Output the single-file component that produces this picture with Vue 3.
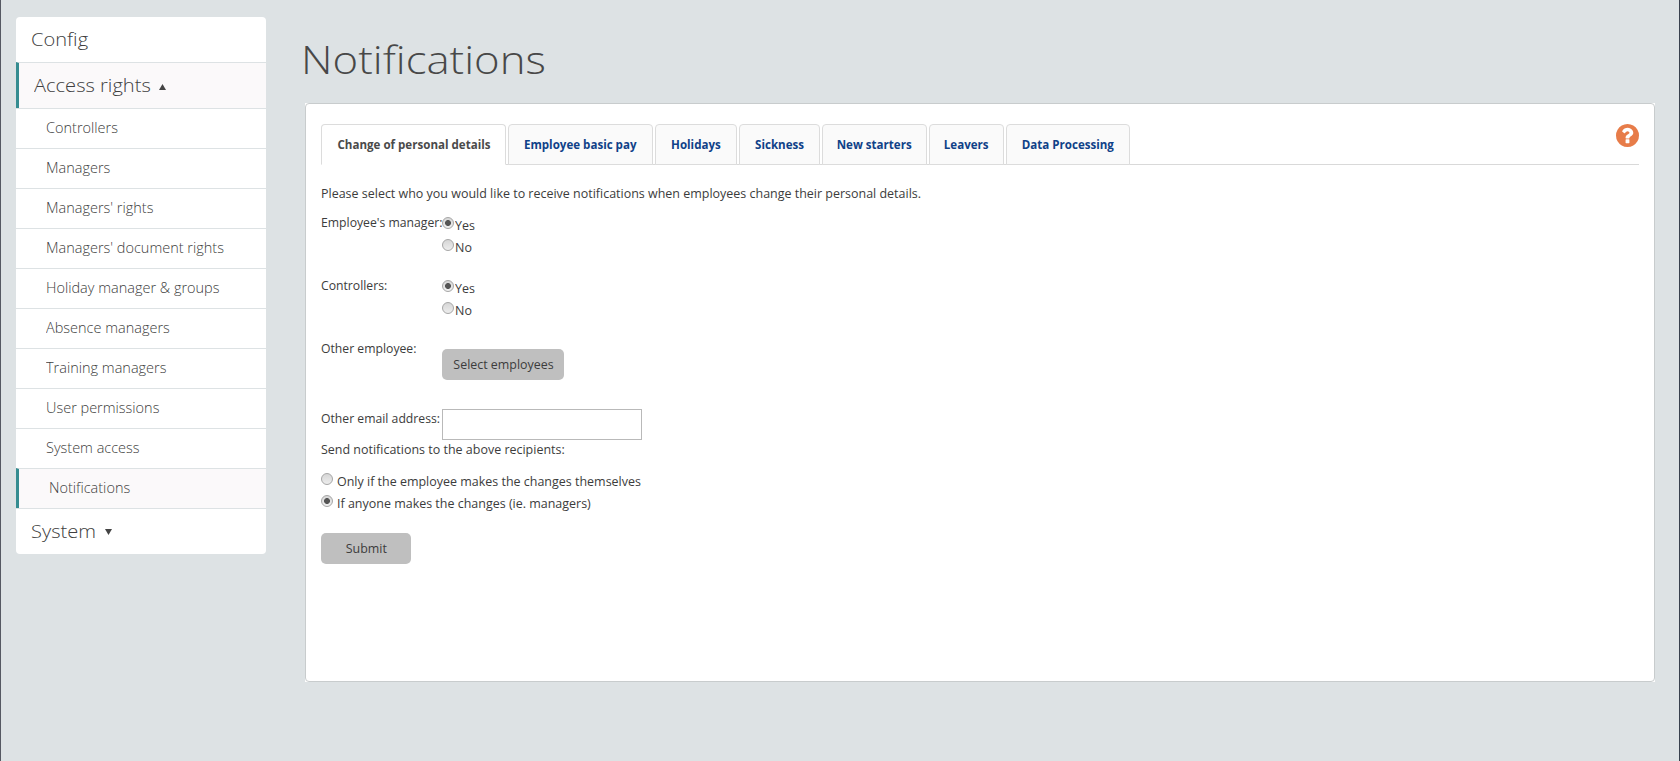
<script setup>
import { ref } from 'vue'

const accessItems = [
  'Controllers',
  'Managers',
  "Managers' rights",
  "Managers' document rights",
  'Holiday manager & groups',
  'Absence managers',
  'Training managers',
  'User permissions',
  'System access',
  'Notifications',
]
const tabs = [
  { label: 'Change of personal details', width: 185 },
  { label: 'Employee basic pay', width: 145 },
  { label: 'Holidays', width: 82 },
  { label: 'Sickness', width: 81 },
  { label: 'New starters', width: 105 },
  { label: 'Leavers', width: 75 },
  { label: 'Data Processing', width: 124 },
]
const activeTab = ref('Change of personal details')
const manager = ref('Yes')
const controllers = ref('Yes')
const scope = ref('anyone')
const email = ref('')
</script>

<template>
  <div class="page">
    <nav class="menu">
      <a class="top first"><span>Config</span></a>
      <a class="top on">
        <span>Access rights</span>
        <svg class="caret up" width="7" height="6" viewBox="0 0 7 6"><path d="M3.5 0L7 6H0z" /></svg>
      </a>
      <a v-for="item in accessItems" :key="item" class="sub" :class="{ on: item === 'Notifications' }">
        <span>{{ item }}</span>
      </a>
      <a class="top last">
        <span>System</span>
        <svg class="caret down" width="7" height="6" viewBox="0 0 7 6"><path d="M0 0h7L3.5 6z" /></svg>
      </a>
    </nav>

    <main class="main">
      <h1><span>Notifications</span></h1>
      <div class="frame">
        <section class="panel">
          <header class="tabbar">
            <button
              v-for="tab in tabs"
              :key="tab.label"
              class="tab"
              :class="{ active: tab.label === activeTab }"
              :style="{ width: tab.width + 'px' }"
              @click="activeTab = tab.label"
            ><span>{{ tab.label }}</span></button>
            <svg class="help" width="23" height="23" viewBox="0 0 1536 1536">
              <path d="M896 1248v-192q0-14-9-23t-23-9H672q-14 0-23 9t-9 23v192q0 14 9 23t23 9h192q14 0 23-9t9-23zm256-672q0-88-55.500-163t-138.500-116-170-41q-243 0-371 213-15 24 8 42l132 100q7 6 19 6 16 0 25-12 53-68 86-92 34-24 86-24 48 0 85.500 26t37.500 59q0 38-20 61t-68 45q-63 28-115.500 86.500T640 892v36q0 14 9 23t23 9h192q14 0 23-9t9-23q0-19 21.500-49.500T972 829q32-18 49-28.500t46-35 44.500-48 28-60.500 12.500-81zm384 192q0 209-103 385.500T1153.500 1433 768 1536t-385.500-103T103 1153.500 0 768t103-385.500T382.500 103 768 0t385.500 103T1433 382.500 1536 768z" />
            </svg>
          </header>

          <p class="intro"><span class="t">Please select who you would like to receive notifications when employees change their personal details.</span></p>

          <div class="field">
            <div class="label"><span class="t">Employee's manager:</span></div>
            <div class="options">
              <label v-for="o in ['Yes', 'No']" :key="o"><input v-model="manager" type="radio" name="manager" :value="o" /><span class="t">{{ o }}</span></label>
            </div>
          </div>
          <div class="field">
            <div class="label"><span class="t">Controllers:</span></div>
            <div class="options">
              <label v-for="o in ['Yes', 'No']" :key="o"><input v-model="controllers" type="radio" name="controllers" :value="o" /><span class="t">{{ o }}</span></label>
            </div>
          </div>
          <div class="field pick">
            <div class="label"><span class="t">Other employee:</span></div>
            <button class="btn wide"><span>Select employees</span></button>
          </div>
          <div class="field mail">
            <div class="label"><span class="t">Other email address:</span></div>
            <input v-model="email" class="text" type="text" />
          </div>
          <p class="send"><span class="t">Send notifications to the above recipients:</span></p>
          <div class="options scope">
            <label><input v-model="scope" type="radio" name="scope" value="self" /><span class="t">Only if the employee makes the changes themselves</span></label>
            <label><input v-model="scope" type="radio" name="scope" value="anyone" /><span class="t">If anyone makes the changes (ie. managers)</span></label>
          </div>
          <button class="btn submit"><span>Submit</span></button>
        </section>
      </div>
    </main>
  </div>
</template>

<style>
body {
  background: #dde2e4;
}
</style>

<style scoped>
* {
  box-sizing: border-box;
}
.page {
  display: flex;
  align-items: flex-start;
  height: 761px;
  padding-left: 15px;
  border-left: 1px solid #555862;
  border-right: 1px solid #39414d;
  background: #dde2e4;
  color: #3c3c3c;
  font-family: 'Open Sans', 'Liberation Sans', sans-serif;
  font-size: 13.5px;
}
.menu {
  width: 250px;
  margin-top: 17px;
  border-radius: 4px;
  overflow: hidden;
  background: #fff;
  color: #404040;
  font-weight: 300;
}
.menu a {
  display: flex;
  align-items: center;
  border-top: 1px solid #dde2e4;
}
.menu span {
  font-variant-ligatures: none;
  transform-origin: left;
  white-space: nowrap;
}
.menu .top {
  height: 46px;
  padding: 0 0 1px 15px;
  font-size: 18px;
}
.menu .top span {
  transform: scaleX(1.115);
}
.menu .first {
  height: 45px;
  border-top: 0;
}
.menu .sub {
  height: 40px;
  padding: 0 0 2px 30px;
  font-size: 14px;
}
.menu .sub span {
  transform: scaleX(1.035);
}
.menu .on {
  border-left: 3px solid #358c90;
  background: #fbf9fa;
}
.caret {
  fill: #444;
}
.up {
  margin: 3px 0 0 20px;
}
.down {
  margin: 2px 0 0 16px;
}
.main {
  margin-left: 39px;
}
h1 {
  height: 103px;
  margin: 0;
  padding-top: 33px;
  font-size: 38px;
  font-weight: 300;
  line-height: 52px;
  color: #484848;
}
h1 span {
  display: inline-block;
  margin-left: -4px;
  font-variant-ligatures: none;
  transform: scaleX(1.15);
  transform-origin: left;
}
.frame {
  width: 1350px;
  height: 579px;
  background: #fff;
}
.panel {
  height: 100%;
  padding: 20px 15px;
  border: 1px solid #c8cccd;
  border-radius: 4px;
}
.t {
  display: inline-block;
  white-space: nowrap;
  transform: scaleX(0.924);
  transform-origin: left;
}
.tabbar {
  display: flex;
  gap: 2px;
  height: 41px;
  box-shadow: inset 0 -1px #d9d9d9;
}
.tab {
  padding: 0 0 2px;
  border: 1px solid #dcdcdc;
  border-radius: 4px 4px 0 0;
  background: #fafafa;
  color: #0f4188;
  font: inherit;
  font-size: 13px;
  font-weight: 700;
  white-space: nowrap;
}
.tab span,
.btn span {
  display: inline-block;
  transform: scaleX(0.89);
}
.tab.active {
  border-bottom-color: #fff;
  background: #fff;
  color: #4a4a4a;
}
.help {
  margin-left: auto;
  fill: #e77c49;
}
p {
  margin: 0;
  line-height: 20px;
}
.intro {
  margin-top: 18px;
}
.field {
  display: flex;
  height: 63px;
}
.intro + .field {
  margin-top: 10px;
}
.label {
  width: 121px;
  margin-top: -1px;
  line-height: 20px;
}
.label .t {
  transform: scaleX(0.904);
}
.options {
  display: flex;
  flex-direction: column;
  padding-top: 2px;
}
.options label {
  display: flex;
  height: 22px;
  line-height: 20px;
}
.options input {
  appearance: none;
  width: 12px;
  height: 12px;
  margin: 2px 1px 0 0;
  border: 1px solid #a6a6a6;
  border-radius: 50%;
  background: linear-gradient(#d6d6d6, #ededed);
}
.options input:checked {
  background: radial-gradient(circle, #555 2.6px, transparent 3.3px), linear-gradient(#d6d6d6, #f0f0f0);
}
.pick {
  height: 70px;
}
.btn {
  height: 31px;
  padding: 0 0 1px;
  border: 0;
  border-radius: 5px;
  background: #bfbfbf;
  color: #3c3c3c;
  font: inherit;
}
.btn span {
  transform: scaleX(0.92);
}
.wide {
  width: 122px;
  margin-top: 10px;
}
.mail {
  height: 31px;
}
.text {
  width: 200px;
  height: 31px;
  border: 1px solid #b9b9b9;
  background: #fff;
}
.send {
  margin-top: -1px;
}
.scope {
  margin-top: 10px;
}
.scope input {
  margin-right: 4px;
}
.submit {
  width: 90px;
  margin-top: 18px;
}
</style>
